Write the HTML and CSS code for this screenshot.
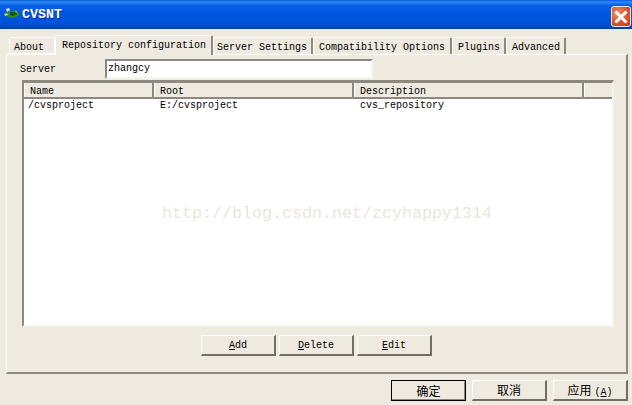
FILE: index.html
```html
<!DOCTYPE html>
<html lang="en">
<head>
<meta charset="utf-8">
<title>CVSNT</title>
<link rel="stylesheet" href="styles.css">
</head>
<body>
<div class="window">
  <header class="titlebar">
    <svg class="app-icon" width="20" height="16" viewBox="0 0 20 16">
      <path d="M2 7 L6 5 L10 4 L14 4 L18 7 L16 9 L11 11 L6 10 Z" fill="#2f8a2a"/>
      <path d="M8 5 L12 5 L15 7 L11 9 L8 8 Z" fill="#14501a"/>
      <path d="M4 2 L7 1 L8 3 L5 5 Z" fill="#d8efe0"/>
      <path d="M2 7 L5 6 L6 8 L3 9 Z" fill="#a9d08f"/>
      <path d="M13 3 L16 5 L14 6 Z" fill="#7dbb50"/>
    </svg>
    <span class="title-text">CVSNT</span>
    <button class="close" aria-label="Close">
      <svg width="20" height="20" viewBox="0 0 20 20"><path d="M5.5 5.5 L14.5 14.5 M14.5 5.5 L5.5 14.5" stroke="#fff" stroke-width="3" stroke-linecap="square"/></svg>
    </button>
  </header>
  <div class="content">
    <nav class="tabs">
      <span class="tab tab-about">About</span>
      <span class="tab tab-active">Repository configuration</span>
      <span class="tab tab-server">Server Settings</span>
      <span class="tab tab-compat">Compatibility Options</span>
      <span class="tab tab-plugins">Plugins</span>
      <span class="tab tab-advanced">Advanced</span>
    </nav>
    <section class="panel">
      <div class="server-row">
        <label class="server-label">Server</label>
        <div class="field">zhangcy</div>
      </div>
      <div class="list">
        <div class="list-head">
          <span class="col col-name">Name</span>
          <span class="col col-root">Root</span>
          <span class="col col-desc">Description</span>
          <span class="col col-rest"></span>
        </div>
        <div class="list-row">
          <span class="cell cell-name">/cvsproject</span>
          <span class="cell cell-root">E:/cvsproject</span>
          <span class="cell">cvs_repository</span>
        </div>
      </div>
      <div class="panel-actions">
        <button class="btn"><u>A</u>dd</button>
        <button class="btn"><u>D</u>elete</button>
        <button class="btn"><u>E</u>dit</button>
      </div>
    </section>
    <footer class="footer">
      <button class="btn btn-default cjk">确定</button>
      <button class="btn cjk">取消</button>
      <button class="btn cjk">应用<span class="accel">(<u>A</u>)</span></button>
    </footer>
  </div>
  <div class="watermark">http://blog.csdn.net/zcyhappy1314</div>
</div>
</body>
</html>
```
FILE: styles.css
```css
* { box-sizing: border-box; }
html, body { margin: 0; padding: 0; }
body {
  width: 632px;
  height: 405px;
  overflow: hidden;
  background: #eeeadf;
  font-family: "Liberation Mono", "Noto Sans CJK SC", monospace;
  font-size: 10px;
  color: #000;
}
.window {
  position: relative;
  width: 632px;
  height: 405px;
  display: flex;
  flex-direction: column;
}
.titlebar {
  height: 29px;
  flex: none;
  display: flex;
  align-items: center;
  padding: 0 1px 0 2px;
  background: linear-gradient(180deg, #0a5ad8 0, #2e8cf5 2px, #0b62e6 5px, #0055e0 14px, #0053dc 22px, #0046c0 27px, #003aa8 29px);
  color: #fff;
}
.app-icon { flex: none; margin-top: 0; }
.title-text {
  font-family: "Liberation Mono", monospace;
  font-weight: 700;
  font-size: 13.33px;
  text-shadow: 1px 1px 0 #0a2f9a;
}
.close {
  margin: 3px 0 0 auto;
  width: 20px;
  height: 21px;
  padding: 0;
  display: flex;
  border: 1px solid #f3e8e0;
  border-radius: 3px;
  background: radial-gradient(circle at 35% 35%, #f0906a, #d9502a 60%, #c23a14);
}
.close svg { margin: 0 -1px; flex: none; }
.content {
  flex: 1;
  display: flex;
  flex-direction: column;
  padding: 6px 4px 0 6px;
}
.tabs {
  display: flex;
  align-items: flex-end;
  height: 19px;
  padding-left: 3px;
  position: relative;
  z-index: 1;
}
.tab {
  height: 17px;
  padding: 4px 0 0 5px;
  line-height: 12px;
  white-space: nowrap;
  background: #eeeadf;
  border-top: 1px solid #fff;
  border-left: 1px solid #fff;
  border-right: 2px solid #8c8a80;
  border-radius: 2px 2px 0 0;
}
.tab-about { width: 46px; padding-left: 4px; border-right: 1px solid #fff; border-bottom: 1px solid #fff; }
.tab-active {
  width: 158px;
  height: 20px;
  padding: 4px 0 0 6px;
  margin-bottom: -1px;
  position: relative;
}
.tab-server { width: 100px; padding-left: 3px; }
.tab-compat { width: 139px; }
.tab-plugins { width: 54px; }
.tab-advanced { width: 60px; }
.panel {
  width: 622px;
  height: 320px;
  flex: none;
  display: flex;
  flex-direction: column;
  padding: 4px 0 0 13px;
  border-top: 1px solid #fff;
  border-left: 1px solid #fff;
  border-right: 2px solid #8c8a80;
  border-bottom: 2px solid #8c8a80;
}
.server-row {
  display: flex;
  align-items: center;
  height: 20px;
  flex: none;
}
.server-label { width: 85px; }
.field {
  width: 268px;
  height: 20px;
  padding: 2px 0 0 1px;
  line-height: 12px;
  background: #fff;
  border: 2px solid;
  border-color: #8c8a80 #f6f4ec #f6f4ec #8c8a80;
}
.list {
  width: 592px;
  height: 247px;
  flex: none;
  margin: 1px 0 0 2px;
  background: #fff;
  border: 2px solid;
  border-color: #8c8a80 #f8f2ec #f8f2ec #8c8a80;
  border-top-width: 3px;
  display: flex;
  flex-direction: column;
}
.list-head {
  display: flex;
  height: 16px;
  flex: none;
  background: #eeeadf;
  border-bottom: 2px solid #8c8a80;
}
.col {
  height: 14px;
  padding: 3px 0 0 5px;
  line-height: 12px;
  border-right: 2px solid #8c8a80;
  border-left: 1px solid #fff;
}
.col-name { width: 130px; }
.col-root { width: 200px; }
.col-desc { width: 230px; }
.col-rest { flex: 1; border-right: 0; }
.list-row {
  display: flex;
  height: 14px;
  line-height: 14px;
  padding-left: 4px;
}
.cell-name { width: 132px; }
.cell-root { width: 200px; }
.panel-actions {
  display: flex;
  gap: 3px;
  margin-top: 8px;
  padding-left: 181px;
}
.btn {
  width: 75px;
  height: 21px;
  padding: 1px 0 0;
  font: inherit;
  color: #000;
  background: #eeeadf;
  border: 1px solid;
  border-color: #fff #716f64 #716f64 #fff;
  border-right-width: 2px;
  border-bottom-width: 2px;
}
.footer {
  display: flex;
  gap: 6px;
  margin-top: 6px;
  padding-left: 385px;
}
.cjk { font-size: 12px; padding-top: 0; }
.accel { font-size: 10px; margin-left: 3px; }
.btn-default { border: 1px solid #000; box-shadow: inset -1px -1px 0 #8c8a80; }
.watermark {
  position: absolute;
  left: 162px;
  top: 204px;
  font-family: "Liberation Mono", monospace;
  font-size: 16.67px;
  line-height: 20px;
  color: #e8e6de;
  white-space: nowrap;
}
```
